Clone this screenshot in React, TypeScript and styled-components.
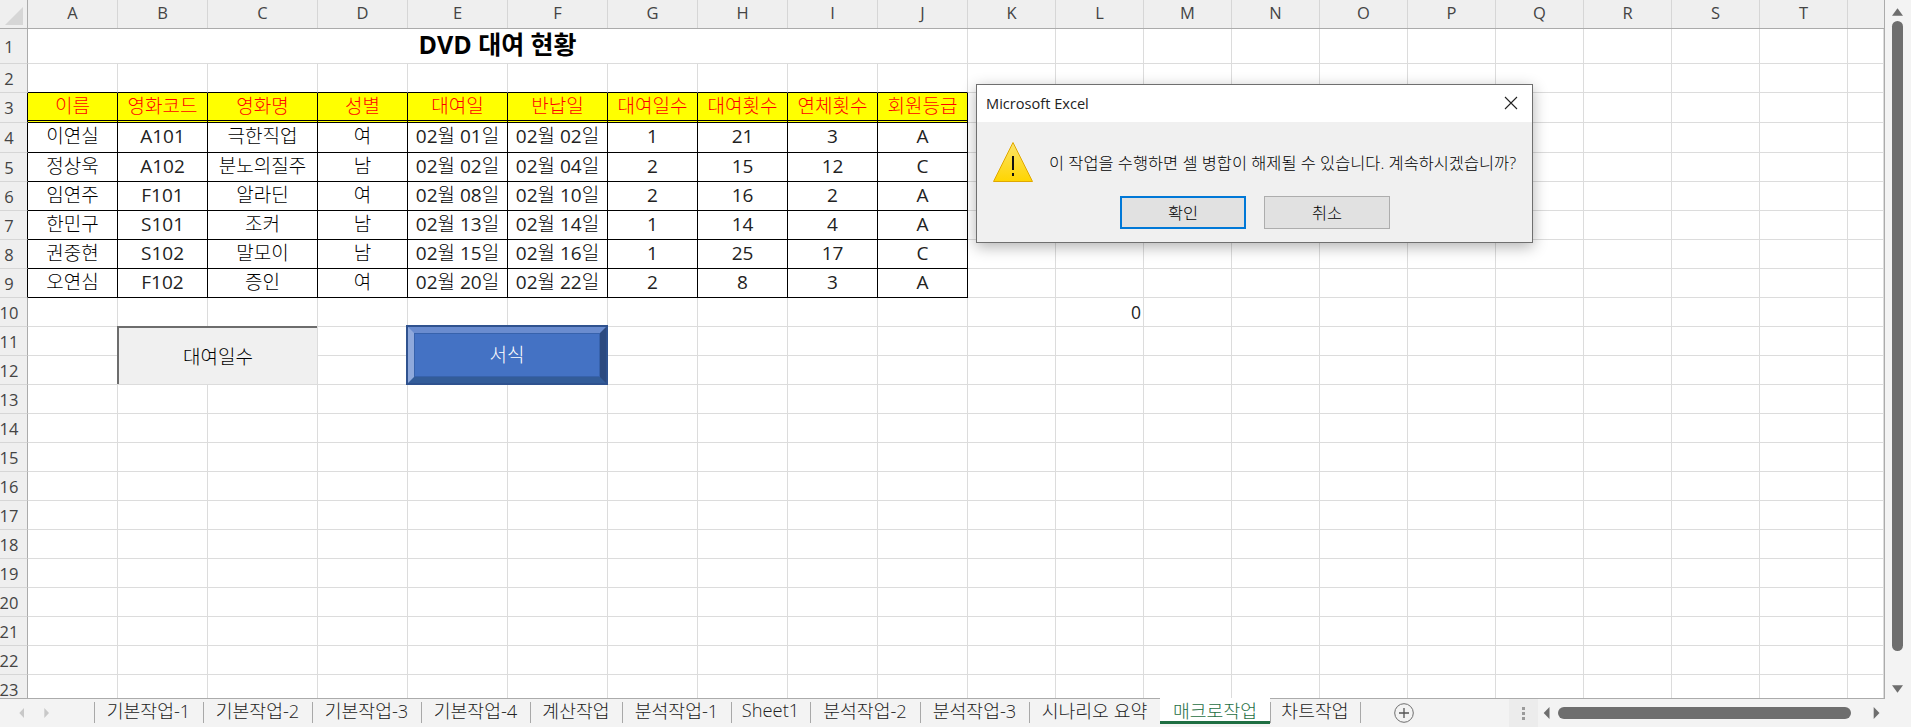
import React from 'react';
import styled, { createGlobalStyle } from 'styled-components';

const FONT = `"Open Sans", "Noto Sans CJK KR", sans-serif`;
const TEMPLATE = '28px 90px 90px 110px 90px 100px 100px 90px 90px 90px 90px repeat(10, 88px) 1fr';
const COLS = 'ABCDEFGHIJKLMNOPQRST'.split('');

const Global = createGlobalStyle`
  html, body { margin: 0; padding: 0; background: #fff; }
  body { font-family: ${FONT}; overflow: hidden; }
`;

const Page = styled.div`
  position: relative;
  width: 1911px;
  height: 727px;
  display: flex;
  flex-direction: column;
  overflow: hidden;
`;
const Main = styled.div`
  display: flex;
  height: 699px;
`;
const Sheet = styled.div`
  position: relative;
  width: 1885px;
  height: 699px;
  overflow: hidden;
  border-bottom: 1px solid #ababab;
  border-right: 1px solid #ababab;
  box-sizing: border-box;
`;
const ColBar = styled.div`
  display: grid;
  grid-template-columns: ${TEMPLATE};
  height: 29px;
  box-sizing: border-box;
  background: #efefef;
  border-bottom: 1px solid #ababab;
`;
const Corner = styled.div`
  display: flex;
  align-items: flex-end;
  justify-content: flex-end;
  border-right: 1px solid #ababab;
  padding: 0 4px 3px 0;
`;
const ColLabel = styled.div`
  display: flex;
  align-items: center;
  justify-content: center;
  padding-bottom: 4px;
  font-size: 16.5px;
  color: #444;
  border-right: 1px solid #d6d6d6;
  &:last-child { border-right: 0; }
`;
const Row = styled.div<{ $h: number }>`
  display: grid;
  grid-template-columns: ${TEMPLATE};
  height: ${(p) => p.$h}px;
`;
const RowLabel = styled.div<{ $dark?: boolean }>`
  display: flex;
  align-items: center;
  justify-content: center;
  box-sizing: border-box;
  padding-right: 9px;
  font-size: 16.5px;
  color: #444;
  background: #efefef;
  border-right: 1px solid ${(p) => (p.$dark ? '#000' : '#ababab')};
  border-bottom: 1px solid #d6d6d6;
`;
const Cell = styled.div`
  box-sizing: border-box;
  border-right: 1px solid #dcdcdc;
  border-bottom: 1px solid #dcdcdc;
`;
const AboveTable = styled(Cell)`
  border-bottom-color: #000;
`;
const TitleCell = styled(Cell)`
  grid-column: 2 / span 10;
  display: flex;
  align-items: center;
  justify-content: center;
  font-size: 25px;
  font-weight: 700;
  line-height: 1;
  color: #000;
  padding-bottom: 4px;
`;
const Latin = styled.span`
  font-weight: 400;
  color: #222;
`;
const HeadCell = styled(Cell)`
  display: flex;
  align-items: center;
  justify-content: center;
  background: #ffff00;
  color: #ff0000;
  font-size: 19px;
  font-weight: 300;
  line-height: 1;
  white-space: nowrap;
  border-right: 1px solid #000;
  border-bottom: 3px double #000;
`;
const DataCell = styled(Cell)`
  display: block;
  text-align: center;
  color: #000;
  font-size: 19px;
  font-weight: 300;
  line-height: 27px;
  white-space: nowrap;
  border-right: 1px solid #000;
  border-bottom: 1px solid #000;
`;
const NumberCell = styled(Cell)`
  display: flex;
  align-items: center;
  justify-content: flex-end;
  padding-right: 2px;
  font-size: 17.5px;
  color: #222;
`;
const CaptionShape = styled.div`
  position: absolute;
  left: 117px;
  top: 326px;
  width: 200px;
  height: 58px;
  box-sizing: border-box;
  display: flex;
  align-items: center;
  justify-content: center;
  background: #f0f0f0;
  border-top: 2px solid #6d6d6d;
  border-left: 2px solid #6d6d6d;
  font-size: 19px;
  font-weight: 300;
  color: #000;
`;
const BevelButton = styled.div`
  position: absolute;
  left: 406px;
  top: 325px;
  width: 202px;
  height: 60px;
  box-sizing: border-box;
  display: flex;
  align-items: center;
  justify-content: center;
  background: #4472c4;
  border: 2px solid #2f528f;
  color: #fff;
  font-size: 19px;
  font-weight: 300;
  &::before {
    content: '';
    position: absolute;
    inset: 0;
    border-style: solid;
    border-width: 6px;
    border-color: #6a8ccf #2c4a80 #335c99 #8fa9dc;
  }
  &::after {
    content: '';
    position: absolute;
    inset: 6px;
    border: 1px solid #3762ac;
  }
`;
const BevelText = styled.span`
  position: relative;
  top: -1px;
`;
const VScroll = styled.div`
  width: 26px;
  height: 699px;
  background: #f3f3f3;
  display: flex;
  flex-direction: column;
  align-items: center;
  padding: 6px 2px 3px 0;
  box-sizing: border-box;
`;
const VThumb = styled.div`
  width: 11px;
  height: 630px;
  margin: 2px 0 auto;
  border-radius: 6px;
  background: #6e6e6e;
`;
const TabBar = styled.div`
  display: flex;
  align-items: stretch;
  height: 28px;
  background: #f3f3f3;
`;
const TabNav = styled.div`
  width: 94px;
  display: flex;
  align-items: center;
  gap: 17px;
  padding: 0 0 1px 18px;
  box-sizing: border-box;
`;
const TabItem = styled.div<{ $w: number; $active?: boolean }>`
  position: relative;
  width: ${(p) => p.$w}px;
  box-sizing: border-box;
  display: flex;
  align-items: center;
  justify-content: center;
  padding-bottom: 7px;
  font-size: 18.3px;
  font-weight: 300;
  white-space: pre;
  color: ${(p) => (p.$active ? '#1e6e42' : '#222')};
  background: ${(p) => (p.$active ? '#fff' : 'transparent')};
  ${(p) => p.$active && 'border-bottom: 3px solid #1e6e42; margin-bottom: 3px; height: 26px; padding-bottom: 0; margin-top: -1px;'}
  &::before {
    content: '';
    position: absolute;
    left: 0;
    top: 3px;
    height: 21px;
    border-left: 1px solid ${(p) => (p.$active ? 'transparent' : '#a8a8a8')};
  }
`;
const TabEnd = styled.div`
  width: 1px;
  height: 21px;
  margin-top: 3px;
  background: #a8a8a8;
`;
const AddTab = styled.div`
  margin-left: 33px;
  width: 20px;
  display: flex;
  align-items: center;
`;
const Spacer = styled.div`
  width: 95px;
`;
const Grip = styled.div`
  width: 29px;
  background: #ececec;
  display: flex;
  flex-direction: column;
  align-items: center;
  justify-content: center;
  gap: 2px;
  span { width: 3px; height: 3px; background: #9a9a9a; }
`;
const HScroll = styled.div`
  flex: 1;
  display: flex;
  align-items: center;
  padding-left: 4px;
  box-sizing: border-box;
`;
const HThumb = styled.div`
  width: 293px;
  height: 12px;
  margin: 0 21px 0 6px;
  border-radius: 6px;
  background: #6e6e6e;
`;
const Dialog = styled.div`
  position: absolute;
  left: 976px;
  top: 84px;
  width: 557px;
  height: 159px;
  box-sizing: border-box;
  display: flex;
  flex-direction: column;
  background: #f0f0f0;
  border: 1px solid #6f6f6f;
  box-shadow: 0 4px 14px rgba(0, 0, 0, 0.3);
`;
const DialogTitle = styled.div`
  height: 37px;
  background: #fff;
  display: flex;
  align-items: center;
  justify-content: space-between;
  padding: 0 14px 2px 9px;
  box-sizing: border-box;
  font-size: 14.6px;
  color: #222;
`;
const DialogBody = styled.div`
  display: flex;
  align-items: center;
  gap: 16px;
  padding: 20px 0 0 16px;
  height: 40px;
`;
const Message = styled.div`
  font-size: 16.4px;
  font-weight: 300;
  color: #000;
  white-space: nowrap;
`;
const DialogButtons = styled.div`
  display: flex;
  gap: 18px;
  padding: 14px 0 0 143px;
`;
const DialogButton = styled.div<{ $primary?: boolean }>`
  width: 126px;
  height: 33px;
  box-sizing: border-box;
  display: flex;
  align-items: center;
  justify-content: center;
  padding-bottom: 2px;
  background: #e1e1e1;
  border: ${(p) => (p.$primary ? '2px solid #0078d7' : '1px solid #adadad')};
  font-size: 16.4px;
  font-weight: 300;
  color: #000;
`;

const Tri = ({ dir, color, size = 10 }: { dir: 'l' | 'r' | 'u' | 'd'; color: string; size?: number }) => {
  const pts = { l: '9,0 9,12 2,6', r: '2,0 2,12 9,6', u: '0,9 12,9 6,2', d: '0,2 12,2 6,9' }[dir];
  return (
    <svg width={size} height={size + 2} viewBox="0 0 12 12" preserveAspectRatio="none">
      <polygon points={pts} fill={color} />
    </svg>
  );
};

const Mixed = ({ text }: { text: string }) => (
  <>
    {text.split(/([^\uAC00-\uD7A3 ]+)/).map((part, i) =>
      i % 2 ? <Latin key={i}>{part}</Latin> : part,
    )}
  </>
);

const heads = ['이름', '영화코드', '영화명', '성별', '대여일', '반납일', '대여일수', '대여횟수', '연체횟수', '회원등급'];
const rows = [
  ['이연실', 'A101', '극한직업', '여', '02월 01일', '02월 02일', '1', '21', '3', 'A'],
  ['정상욱', 'A102', '분노의질주', '남', '02월 02일', '02월 04일', '2', '15', '12', 'C'],
  ['임연주', 'F101', '알라딘', '여', '02월 08일', '02월 10일', '2', '16', '2', 'A'],
  ['한민구', 'S101', '조커', '남', '02월 13일', '02월 14일', '1', '14', '4', 'A'],
  ['권중현', 'S102', '말모이', '남', '02월 15일', '02월 16일', '1', '25', '17', 'C'],
  ['오연심', 'F102', '증인', '여', '02월 20일', '02월 22일', '2', '8', '3', 'A'],
];
const tabs: [string, number][] = [
  ['기본작업-1', 109], ['기본작업-2', 109], ['기본작업-3', 109], ['기본작업-4', 109], ['계산작업', 92],
  ['분석작업-1', 109], ['Sheet1', 79], ['분석작업-2', 110], ['분석작업-3', 109], ['시나리오 요약', 131],
];

const blanks = (from: number, to: number) =>
  Array.from({ length: to - from }, (_, i) => <Cell key={i} />);

export default function App() {
  return (
    <Page>
      <Global />
      <Main>
        <Sheet>
          <ColBar>
            <Corner>
              <svg width="18" height="18" viewBox="0 0 18 18"><polygon points="18,0 18,18 0,18" fill="#d6d6d6" /></svg>
            </Corner>
            {COLS.map((c) => <ColLabel key={c}>{c}</ColLabel>)}
            <ColLabel />
          </ColBar>

          <Row $h={35}>
            <RowLabel>1</RowLabel>
            <TitleCell>DVD 대여 현황</TitleCell>
            {blanks(0, 11)}
          </Row>
          <Row $h={29}>
            <RowLabel>2</RowLabel>
            {heads.map((h) => <AboveTable key={h} />)}
            {blanks(0, 11)}
          </Row>
          <Row $h={30}>
            <RowLabel $dark>3</RowLabel>
            {heads.map((h) => <HeadCell key={h}>{h}</HeadCell>)}
            {blanks(0, 11)}
          </Row>
          {rows.map((r, i) => (
            <Row key={i} $h={i === 0 ? 30 : 29}>
              <RowLabel $dark>{i + 4}</RowLabel>
              {r.map((v, j) => <DataCell key={j}><Mixed text={v} /></DataCell>)}
              {blanks(0, 11)}
            </Row>
          ))}
          <Row $h={29}>
            <RowLabel>10</RowLabel>
            {blanks(0, 11)}
            <NumberCell>0</NumberCell>
            {blanks(0, 9)}
          </Row>
          {Array.from({ length: 13 }, (_, i) => (
            <Row key={i} $h={29}>
              <RowLabel>{i + 11}</RowLabel>
              {blanks(0, 21)}
            </Row>
          ))}
          <CaptionShape>대여일수</CaptionShape>
          <BevelButton><BevelText>서식</BevelText></BevelButton>
        </Sheet>
        <VScroll>
          <Tri dir="u" color="#6e6e6e" size={11} />
          <VThumb />
          <Tri dir="d" color="#6e6e6e" size={11} />
        </VScroll>
      </Main>

      <TabBar>
        <TabNav>
          <Tri dir="l" color="#c8c8c8" size={8} />
          <Tri dir="r" color="#c8c8c8" size={8} />
        </TabNav>
        {tabs.map(([t, w]) => <TabItem key={t} $w={w}>{t}</TabItem>)}
        <TabItem $w={110} $active>매크로작업</TabItem>
        <TabItem $w={90}>차트작업</TabItem>
        <TabEnd />
        <AddTab>
          <svg width="20" height="20" viewBox="0 0 20 20">
            <circle cx="10" cy="10" r="9.3" fill="none" stroke="#6e6e6e" strokeWidth="1" />
            <path d="M10 5v10M5 10h10" stroke="#555" strokeWidth="1.3" />
          </svg>
        </AddTab>
        <Spacer />
        <Grip><span /><span /><span /></Grip>
        <HScroll>
          <Tri dir="l" color="#6e6e6e" size={10} />
          <HThumb />
          <Tri dir="r" color="#6e6e6e" size={10} />
        </HScroll>
      </TabBar>

      <Dialog>
        <DialogTitle>
          Microsoft Excel
          <svg width="14" height="14" viewBox="0 0 14 14">
            <path d="M1 1l12 12M13 1L1 13" stroke="#222" strokeWidth="1.1" fill="none" />
          </svg>
        </DialogTitle>
        <DialogBody>
          <svg width="40" height="40" viewBox="0 0 40 40">
            <defs>
              <linearGradient id="warn" x1="0" y1="0" x2="0" y2="1">
                <stop offset="0" stopColor="#fbe36a" />
                <stop offset="1" stopColor="#ffd500" />
              </linearGradient>
            </defs>
            <polygon points="20,0.5 39.5,39.5 0.5,39.5" fill="url(#warn)" stroke="#e0a800" strokeWidth="1" />
            <rect x="19" y="14" width="2" height="14" fill="#111" />
            <rect x="19" y="31" width="2" height="3" fill="#111" />
          </svg>
          <Message>이 작업을 수행하면 셀 병합이 해제될 수 있습니다. 계속하시겠습니까?</Message>
        </DialogBody>
        <DialogButtons>
          <DialogButton $primary>확인</DialogButton>
          <DialogButton>취소</DialogButton>
        </DialogButtons>
      </Dialog>
    </Page>
  );
}
